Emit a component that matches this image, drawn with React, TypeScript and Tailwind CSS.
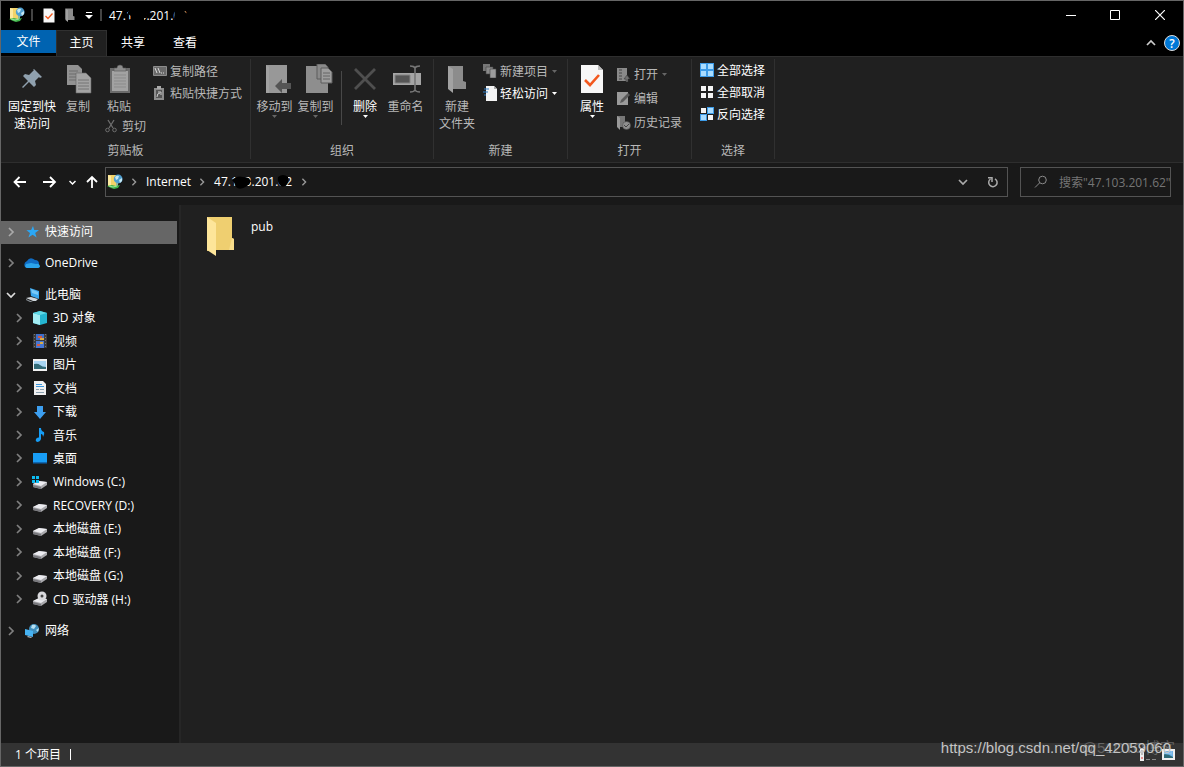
import type { ReactNode } from "react";
import clsx from "clsx";

type IconProps = { className?: string };

/* ---------- small shared glyphs ---------- */

function Chevron({ dir, className }: { dir: "right" | "down" | "up"; className?: string }) {
  const d = { right: "M3 1 L7 5 L3 9", down: "M1 3 L5 7 L9 3", up: "M1 7 L5 3 L9 7" }[dir];
  return (
    <svg viewBox="0 0 10 10" fill="none" stroke="currentColor" className={clsx("shrink-0", className ?? "size-[10px]")}>
      <path d={d} strokeWidth="1.7" />
    </svg>
  );
}

function Caret({ className }: IconProps) {
  return (
    <svg viewBox="0 0 5 3" fill="currentColor" className={clsx("h-[3px] w-[5px] shrink-0", className)}>
      <path d="M0 0h5L2.5 3z" />
    </svg>
  );
}

/* ---------- title bar icons ---------- */

function FtpIcon() {
  return (
    <svg viewBox="0 0 16 16" className="size-4 shrink-0">
      <path d="M1 1h9v11H1z" fill="#f3d368" />
      <path d="M1 1l3 1v10l-3-1z" fill="#fce9a0" />
      <circle cx="11.2" cy="5" r="4.4" fill="#4f9fd0" />
      <path d="M8 3q2-2 4-1l-1 3-2 1zM12 6l3-2v3l-2 2z" fill="#c5e8f5" />
      <path d="M9 9h2v3H9z" fill="#8fb6a0" />
      <path d="M0 12l5-1 4 1 4-1-2 3-4 1-3-1z" fill="#3fb54a" />
      <path d="M2 12l4 1 4-1" fill="none" stroke="#a2e3a0" />
    </svg>
  );
}

function CheckPage({ className }: IconProps) {
  return (
    <svg viewBox="0 0 24 30" className={className}>
      <path d="M1 1h17l5 5v23H1z" fill="#f7f7f7" />
      <path d="M18 1l5 5h-5z" fill="#bdbdbd" />
      <path d="M5 16l5 5 9-10" fill="none" stroke="#f2581e" strokeWidth="2.6" />
    </svg>
  );
}

function GrayFolder({ className }: IconProps) {
  return (
    <svg viewBox="0 0 20 28" className={className}>
      <path d="M1 1h15v15l3 1v7H6L1 22z" fill="#8c8c8c" />
      <path d="M1 1l5 3v24l-5-4z" fill="#a2a2a2" />
    </svg>
  );
}

/* ---------- ribbon icons ---------- */

const PinIcon = () => (
  <svg viewBox="0 0 24 24" className="size-6">
    <path d="M14 2l8 8-2 1-1-1-4 4 1 4-2 2-5-5-6 6-1-1 6-6-5-5 2-2 4 1 5-5-1-1z" fill="#8fa0ae" />
  </svg>
);

const CopyIcon = () => (
  <svg viewBox="-1 0 27 30" className="h-[30px] w-[27px]">
    <path d="M1 1h11l4 4v16H1z" fill="#929292" />
    <path d="M3 7h9M3 10h9M3 13h9M3 16h9" stroke="#6c6c6c" />
    <path d="M10 9h10l5 5v15H10z" fill="#a3a3a3" stroke="#666" strokeWidth=".6" />
    <path d="M12 16h11M12 19h11M12 22h11M12 25h11" stroke="#757575" />
  </svg>
);

const PasteIcon = () => (
  <svg viewBox="-2 0 24 30" className="h-[30px] w-6">
    <path d="M1 4h20v25H1z" fill="#6b6b6b" />
    <path d="M3 7h16v20H3z" fill="#a2a2a2" />
    <path d="M5 4h3q0-3 3-3t3 3h3v3H5z" fill="#8d8d8d" stroke="#555" strokeWidth=".6" />
    <path d="M5 11h12M5 14h12M5 17h12M5 20h12M5 23h12" stroke="#8b8b8b" />
  </svg>
);

const CutIcon = () => (
  <svg viewBox="0 0 12 14" fill="none" stroke="#6e6e6e" className="h-[14px] w-3">
    <path d="M3 1l5 8M9 1L4 9" strokeWidth="1.3" />
    <circle cx="2.5" cy="11" r="1.8" />
    <circle cx="9.5" cy="11" r="1.8" />
  </svg>
);

const PathIcon = () => (
  <svg viewBox="0 0 14 10" className="h-[10px] w-[14px]">
    <path d="M.5.5h13v9H.5z" fill="#6a6a6a" stroke="#8c8c8c" />
    <path d="M2 2l2 5M5 2l2 5M8 7h1M10 7h1" stroke="#ddd" />
  </svg>
);

const ShortcutIcon = () => (
  <svg viewBox="-1 0 11 14" className="h-[14px] w-[11px]">
    <path d="M0 2h10v12H0z" fill="#8d8d8d" />
    <path d="M3 0h4v3H3z" fill="#aaa" />
    <path d="M2 4h6v8H2z" fill="#555" />
    <path d="M3 11q0-4 3-4M4 6h3v3" fill="none" stroke="#ccc" />
  </svg>
);

const MoveToIcon = () => (
  <svg viewBox="-6 0 32 30" className="h-[30px] w-8">
    <path d="M1 1h21v28H1z" fill="#989898" />
    <path d="M1 1l3 2v26H1z" fill="#a2a2a2" />
    <path d="M10 22l7-7v4h9v6h-9v4z" fill="#555" />
  </svg>
);

const CopyToIcon = () => (
  <svg viewBox="-6 0 34 30" className="h-[30px] w-[34px]">
    <path d="M1 2h22v27H1z" fill="#8e8e8e" />
    <path d="M12 0h8l3 3v12H12z" fill="#8a8a8a" stroke="#5c5c5c" />
    <path d="M16 4h7l4 4v11H16z" fill="#9d9d9d" stroke="#5c5c5c" />
    <path d="M18 9h7M18 12h7M18 15h7" stroke="#656565" />
  </svg>
);

const DeleteIcon = () => (
  <svg viewBox="0 0 24 24" className="size-6">
    <path d="M2 2l20 20M22 2L2 22" stroke="#4f4f4f" strokeWidth="2.8" />
  </svg>
);

const RenameIcon = () => (
  <svg viewBox="-2 0 30 28" className="h-7 w-[30px]">
    <path d="M0 8h28v12H0z" fill="#a5a5a5" />
    <path d="M2 10h15v8H2z" fill="#555" stroke="#858585" />
    <path d="M22 2v24M17 1q4 0 5 2 1-2 5-2M17 27q4 0 5-2 1 2 5 2" fill="none" stroke="#777" strokeWidth="1.6" />
  </svg>
);

const NewItemIcon = () => (
  <svg viewBox="0 0 14 14" className="size-[14px]">
    <path d="M0 0h7v7H0z" fill="#777" />
    <path d="M3 3h7v7H3z" fill="#8b8b8b" stroke="#444" strokeWidth=".6" />
    <path d="M7 5h6v9H7z" fill="#9c9c9c" stroke="#444" strokeWidth=".6" />
  </svg>
);

const EasyAccessIcon = () => (
  <svg viewBox="0 0 14 16" className="h-4 w-[14px]">
    <path d="M3 1h8l3 3v12H3z" fill="#f4f4f4" />
    <path d="M11 1l3 3h-3z" fill="#aaa" />
    <path d="M1 4h5M0 7h5M1 10h2" stroke="#2f7fc8" strokeWidth="1.2" />
  </svg>
);

const OpenIcon = () => (
  <svg viewBox="0 0 13 15" className="h-[15px] w-[13px]">
    <path d="M0 1h10v13H0z" fill="#8a8a8a" />
    <path d="M2 3h3M2 6h3M2 9h3M2 12h3" stroke="#444" />
    <path d="M9 15v-3H7l3-4 3 4h-2v3z" fill="#707070" stroke="#333" strokeWidth=".5" />
  </svg>
);

const EditIcon = () => (
  <svg viewBox="0 0 13 15" className="h-[15px] w-[13px]">
    <path d="M0 1h11v13H0z" fill="#9a9a9a" />
    <path d="M3 12l1-3 7-7 2 2-7 7z" fill="#5a5a5a" />
  </svg>
);

const HistoryIcon = () => (
  <svg viewBox="0 0 14 15" className="h-[15px] w-[14px]">
    <path d="M0 1h8v11H0z" fill="#777" />
    <path d="M0 1l3 2v12l-3-3z" fill="#999" />
    <circle cx="9.5" cy="10.5" r="4" fill="#8f8f8f" stroke="#444" strokeWidth=".5" />
    <path d="M7 10l2 2 3-3" fill="none" stroke="#444" />
  </svg>
);

const BLUE = "#a9dcff";
const WHITE = "#f5f5f5";

function TilesIcon({ fills }: { fills: string[] }) {
  return (
    <svg viewBox="0 0 14 14" className="size-[14px]">
      {fills.map((fill, i) => {
        const x = (i % 2) * 7;
        const y = i > 1 ? 7 : 0;
        return fill === WHITE ? (
          <rect key={i} x={x + 1} y={y + 1} width="5" height="5" fill={fill} />
        ) : (
          <rect key={i} x={x + 0.5} y={y + 0.5} width="6" height="6" fill={fill} stroke="#3c9be8" />
        );
      })}
    </svg>
  );
}

/* ---------- navigation pane icons ---------- */

const StarIcon = () => (
  <svg viewBox="0 0 16 16" className="size-4">
    <path d="M9 2l1.200 4H15l-3.800 2.900 1.400 4.600-4-2.700-4.200 2.700 1.600-4.600L2.400 6.300l4.700-.2z" fill="#2ba7f5" />
  </svg>
);

const OneDriveIcon = () => (
  <svg viewBox="0 0 16 16" className="size-4">
    <path d="M1 12q-2-4 2-6 3-5 8-1 4 0 4 4l-2 4H3z" fill="#0f6cc4" />
    <path d="M3 13q-3-1-1-4l5-1 5 1q3-1 4 2 0 2-3 2z" fill="#2ba4ec" />
  </svg>
);

const PcIcon = () => (
  <svg viewBox="0 0 16 16" className="size-4">
    <path d="M6 1l9 3v8L7 9z" fill="#3aa7ee" />
    <path d="M7 2l7 3v3L8 6z" fill="#79c9f7" />
    <path d="M2 11l5-1 7 2-2 2-3 0z" fill="#cfd6db" />
    <path d="M2 12l7 3h-3l-4-2z" fill="#8b9298" />
  </svg>
);

const CubeIcon = () => (
  <svg viewBox="0 0 16 16" className="size-4">
    <path d="M8 1l7 2v10l-7 2-7-2V3z" fill="#25b5d0" />
    <path d="M1 3l7 2v10l-7-2z" fill="#a3edf3" />
    <path d="M8 1l7 2-7 2-7-2z" fill="#5fd8e6" />
  </svg>
);

const VideoIcon = () => (
  <svg viewBox="0 0 16 16" className="size-4">
    <path d="M1 1h14v14H1z" fill="#3b3b3b" />
    <path d="M2.500 1v14M13.500 1v14" stroke="#777" strokeDasharray="1 2" />
    <path d="M4 1h8v6H4z" fill="#3f6fc9" />
    <path d="M4 8h8v7H4z" fill="#4777d2" />
    <path d="M6 3h4v2H6zM5 11h3v2H5z" fill="#d45a3e" />
    <path d="M8 5h4v2H8zM8 9h3v2H8z" fill="#d9ac45" />
  </svg>
);

const PictureIcon = () => (
  <svg viewBox="0 0 16 16" className="size-4">
    <path d="M1 2h14v12H1z" fill="#f2f2f2" />
    <path d="M2 4h12v8H2z" fill="#a8d5f2" />
    <path d="M2 7q4-1 6 1t6 2v2H2z" fill="#326b78" />
  </svg>
);

const DocIcon = () => (
  <svg viewBox="0 0 16 16" className="size-4">
    <path d="M2 1h9l3 3v11H2z" fill="#f0f0f0" />
    <path d="M4 4.500h6M4 6.500h8" stroke="#3c97dc" />
    <path d="M4 9.500h3M8 9.500h4M4 12.500h8" stroke="#8aa0b0" />
  </svg>
);

const DownloadIcon = () => (
  <svg viewBox="0 0 16 16" className="size-4">
    <path d="M5 2h6v6h3l-6 7-6-7h3z" fill="#3d9ff0" />
  </svg>
);

const MusicIcon = () => (
  <svg viewBox="0 0 16 16" className="size-4">
    <path d="M7 1h2q0 3 3 4 1 2-1 5 0-3-2-3v5q-1 3-4 3-2-1-1-3 1-2 3-1.500z" fill="#169df5" />
  </svg>
);

const DesktopIcon = () => (
  <svg viewBox="0 0 16 16" className="size-4">
    <path d="M1 3h14v10H1z" fill="#189df5" />
    <path d="M1 12h14v1.500H1z" fill="#0f66b0" />
  </svg>
);

function DriveIcon({ kind }: { kind?: "windows" | "cd" }) {
  return (
    <svg viewBox="0 0 16 16" className="size-4">
      <path d="M1 10l6-3 8 1v3l-6 4-8-2z" fill="#a9a9ad" />
      <path d="M1 10l6-3 8 1-6 4z" fill="#ececf0" />
      <path d="M1 11l8 2v2l-8-2z" fill="#77777c" />
      {kind === "windows" && <path d="M0 2h3v3H0zM4 2h3v3H4zM0 6h3v3H0zM4 6h3v3H4z" fill="#0cbcf2" />}
      {kind === "cd" && (
        <>
          <circle cx="10" cy="5" r="4.5" fill="#d9d9dc" />
          <circle cx="10" cy="5" r="1.5" fill="#444" />
        </>
      )}
    </svg>
  );
}

const NetworkIcon = () => (
  <svg viewBox="0 0 16 16" className="size-4">
    <circle cx="10" cy="6" r="5" fill="#3f8ebc" />
    <path d="M8 2q3-1 4 1l-2 3-3-1zM12 7l3-2-1 4z" fill="#b7dff0" />
    <path d="M1 6l8 2v6l-8-2z" fill="#46b2f2" />
    <path d="M4 13l4 1-1 1-4-1z" fill="#aab4bb" />
  </svg>
);

/* ---------- ribbon building blocks ---------- */

function Group({ label, className, children }: { label: string; className?: string; children: ReactNode }) {
  return (
    <section aria-label={label} className={clsx("flex shrink-0 flex-col border-r border-[#303030]", className)}>
      <div className="flex h-[83px] items-start">{children}</div>
      <div className="text-center text-[#b8b8b8]">{label}</div>
    </section>
  );
}

interface BigButtonProps {
  icon: ReactNode;
  lines: string[];
  enabled?: boolean;
  menu?: boolean;
  className?: string;
}

function BigButton({ icon, lines, enabled, menu, className }: BigButtonProps) {
  return (
    <button className={clsx("flex shrink-0 flex-col items-center pt-1", enabled ? "text-white" : "text-[#b8b8b8]", className)}>
      <span className="mb-[3px] flex h-8 items-center justify-center">{icon}</span>
      {lines.map((line) => (
        <span key={line} className="whitespace-nowrap">{line}</span>
      ))}
      {menu && <Caret className={enabled ? "text-white" : "text-[#666]"} />}
    </button>
  );
}

interface SmallButtonProps {
  icon: ReactNode;
  label: string;
  enabled?: boolean;
  menu?: boolean;
  className?: string;
}

function SmallButton({ icon, label, enabled, menu, className }: SmallButtonProps) {
  return (
    <button className={clsx("flex items-center whitespace-nowrap", enabled ? "text-white" : "text-[#b8b8b8]", className ?? "h-[22px]")}>
      <span className="flex w-[17px] items-center">{icon}</span>
      {label}
      {menu && <Caret className={clsx("ml-1", enabled ? "text-white" : "text-[#666]")} />}
    </button>
  );
}

/* ---------- navigation pane ---------- */

function TreeRow({ icon, label, open, selected, className }: {
  icon: ReactNode;
  label: string;
  open?: boolean;
  selected?: boolean;
  className?: string;
}) {
  return (
    <button
      aria-expanded={!!open}
      className={clsx("flex w-full items-center text-left", selected && "bg-[#666]", className)}
    >
      <span className="mr-[3px] flex w-5 justify-center">
        <span className={open ? "text-[#ddd]" : selected ? "text-[#aaa]" : "text-[#808080]"}>
          <Chevron dir={open ? "down" : "right"} />
        </span>
      </span>
      <span className="mr-[5px]">{icon}</span>
      {label}
    </button>
  );
}

const places = [
  { label: "3D 对象", icon: <CubeIcon /> },
  { label: "视频", icon: <VideoIcon /> },
  { label: "图片", icon: <PictureIcon /> },
  { label: "文档", icon: <DocIcon /> },
  { label: "下载", icon: <DownloadIcon /> },
  { label: "音乐", icon: <MusicIcon /> },
  { label: "桌面", icon: <DesktopIcon /> },
  { label: "Windows (C:)", icon: <DriveIcon kind="windows" /> },
  { label: "RECOVERY (D:)", icon: <DriveIcon /> },
  { label: "本地磁盘 (E:)", icon: <DriveIcon /> },
  { label: "本地磁盘 (F:)", icon: <DriveIcon /> },
  { label: "本地磁盘 (G:)", icon: <DriveIcon /> },
  { label: "CD 驱动器 (H:)", icon: <DriveIcon kind="cd" /> },
];

function TitleBar() {
  return (
    <header className="flex h-[29px] items-center bg-black pb-px pl-2">
      <FtpIcon />
      <span className="ml-1.5 h-3 w-[2px] bg-[#444]" />
      <button aria-label="属性" className="ml-[10px]"><CheckPage className="h-[15px] w-3" /></button>
      <button aria-label="新建文件夹" className="ml-[10px]"><GrayFolder className="h-[14px] w-[10px]" /></button>
      <button aria-label="自定义快速访问工具栏" className="ml-[10px]">
        <svg viewBox="0 0 8 8" fill="#fff" className="size-2"><path d="M1 1h6v1H1zM0 4h8L4 8z" /></svg>
      </button>
      <span className="mx-[7px] h-3 w-[2px] bg-[#444]" />
      <h1 className="relative text-white">
        47.103.201.62
        {/* censored octets */}
        <svg viewBox="0 0 80 16" className="absolute inset-0 h-4 w-20">
          <path d="M22 0h15v11h-2v5H17v-3l5-1V9l-3-2V5zM66 0h8l2 5 4 3v8H68l-3-4z" fill="#000" />
        </svg>
      </h1>
      <div className="ml-auto flex text-white">
        <button aria-label="最小化" className="flex w-11 justify-center">
          <svg viewBox="0 0 10 10" className="size-[10px]"><path d="M0 5.500h10" stroke="#fff" /></svg>
        </button>
        <button aria-label="最大化" className="flex w-11 justify-center">
          <svg viewBox="0 0 10 10" fill="none" className="size-[10px]"><path d="M.5.5h9v9h-9z" stroke="#fff" /></svg>
        </button>
        <button aria-label="关闭" className="flex w-[46px] justify-center">
          <svg viewBox="0 0 10 10" className="size-[10px]"><path d="M0 0l10 10M10 0L0 10" stroke="#fff" strokeWidth="1.2" /></svg>
        </button>
      </div>
    </header>
  );
}

function Ribbon() {
  return (
    <>
      <div className="flex h-[26px] bg-black text-white">
        <button className="mb-[3px] w-[55px] bg-[#0063b1]">文件</button>
        <button className="w-[51px] border-x border-t border-[#303030] bg-[#202020] pb-0.5">主页</button>
        <button className="w-[52px] pb-0.5">共享</button>
        <button className="w-[52px] pb-0.5">查看</button>
        <button aria-label="最小化功能区" className="ml-auto text-[#ccc]"><Chevron dir="up" /></button>
        <button aria-label="帮助" className="mr-[3px] ml-2">
          <span className="flex size-4 items-center justify-center rounded-full border border-[#ddd] bg-[#0078d7] font-semibold text-white">?</span>
        </button>
      </div>
      <div className="flex h-[107px] shrink-0 border-y border-[#2e2e2e] bg-[#202020] pt-0.5 pb-[3px]">
        <Group label="剪贴板" className="w-[250px]">
          <BigButton enabled icon={<PinIcon />} lines={["固定到快", "速访问"]} className="ml-1.5 w-[50px]" />
          <BigButton icon={<CopyIcon />} lines={["复制"]} className="w-[42px]" />
          <div className="ml-1.5 w-[46px] shrink-0">
            <BigButton icon={<PasteIcon />} lines={["粘贴"]} className="w-7" />
            <SmallButton icon={<CutIcon />} label="剪切" className="mt-[2px] h-[18px]" />
          </div>
          <div className="ml-[2px] pt-px">
            <SmallButton icon={<PathIcon />} label="复制路径" />
            <SmallButton icon={<ShortcutIcon />} label="粘贴快捷方式" />
          </div>
        </Group>
        <Group label="组织" className="w-[183px]">
          <BigButton menu icon={<MoveToIcon />} lines={["移动到"]} className="ml-[3px] w-[41px]" />
          <BigButton menu icon={<CopyToIcon />} lines={["复制到"]} className="w-[41px]" />
          <span className="mt-3 mr-[3px] ml-[5px] h-[54px] w-px bg-[#484848]" />
          <BigButton enabled menu icon={<DeleteIcon />} lines={["删除"]} className="w-10" />
          <BigButton icon={<RenameIcon />} lines={["重命名"]} className="w-[41px]" />
        </Group>
        <Group label="新建" className="w-[134px]">
          <BigButton icon={<GrayFolder className="h-7 w-5" />} lines={["新建", "文件夹"]} className="ml-px w-[44px]" />
          <div className="ml-1 pt-px">
            <SmallButton menu icon={<NewItemIcon />} label="新建项目" />
            <SmallButton enabled menu icon={<EasyAccessIcon />} label="轻松访问" />
          </div>
        </Group>
        <Group label="打开" className="w-[124px]">
          <BigButton enabled menu icon={<CheckPage className="h-[30px] w-6" />} lines={["属性"]} className="ml-[3px] w-[42px]" />
          <div className="ml-1 pt-[3px]">
            <SmallButton menu icon={<OpenIcon />} label="打开" className="h-6" />
            <SmallButton icon={<EditIcon />} label="编辑" className="h-6" />
            <SmallButton icon={<HistoryIcon />} label="历史记录" className="h-6" />
          </div>
        </Group>
        <Group label="选择" className="w-[83px]">
          <div className="ml-2">
            <SmallButton enabled icon={<TilesIcon fills={[BLUE, BLUE, BLUE, BLUE]} />} label="全部选择" />
            <SmallButton enabled icon={<TilesIcon fills={[WHITE, WHITE, WHITE, WHITE]} />} label="全部取消" />
            <SmallButton enabled icon={<TilesIcon fills={[WHITE, BLUE, BLUE, WHITE]} />} label="反向选择" />
          </div>
        </Group>
      </div>
    </>
  );
}

function AddressBar() {
  return (
    <div className="flex h-[42px] shrink-0 items-start bg-[#191919] pt-1 pr-3 pl-3 text-white">
      <div className="flex h-[30px] w-[92px] shrink-0 items-center">
        <button aria-label="后退">
          <svg viewBox="0 0 14 12" fill="none" stroke="#fff" strokeWidth="1.8" className="h-3 w-[14px]"><path d="M13 6H1.500M6.500 1l-5 5 5 5" /></svg>
        </button>
        <button aria-label="前进" className="ml-4">
          <svg viewBox="0 0 14 12" fill="none" stroke="#fff" strokeWidth="1.8" className="h-3 w-[14px]"><path d="M0 6h12M7 1l5 5-5 5" /></svg>
        </button>
        <button aria-label="最近浏览的位置" className="ml-3">
          <svg viewBox="0 0 7 7" fill="none" stroke="#fff" strokeWidth="1.5" className="size-[7px]"><path d="M.5 2l3 3 3-3" /></svg>
        </button>
        <button aria-label="上移" className="ml-[10px]">
          <svg viewBox="0 0 12 14" fill="none" stroke="#fff" strokeWidth="1.8" className="h-[14px] w-3"><path d="M6 13V2M1 7l5-5 5 5" /></svg>
        </button>
      </div>
      <nav className="flex h-[30px] flex-1 items-center border border-[#535353] pb-px pl-px text-[#999]">
        <FtpIcon />
        <Chevron dir="right" className="ml-[7px] size-2" />
        <button className="ml-2 text-white">Internet</button>
        <Chevron dir="right" className="ml-[7px] size-2" />
        <button className="relative ml-2 text-white">
          47.103.201.62
          {/* censored octets */}
          <svg viewBox="0 0 80 20" className="absolute inset-x-0 -top-px h-5 w-20">
            <path d="M18 8q5-5 11-3 6 0 7 3 1 4-3 6-7 5-11 1-1-4-4-7zM64 5q5-4 10 0v5q-2 6-7 4-4-3-3-9z" fill="#000" />
          </svg>
        </button>
        <Chevron dir="right" className="ml-2 size-2" />
        <button aria-label="以前的位置" className="ml-auto text-[#aaa]"><Chevron dir="down" /></button>
        <button aria-label="刷新" className="mr-2 ml-[19px] text-[#aaa]">
          <svg viewBox="0 0 12 12" fill="none" stroke="currentColor" strokeWidth="1.5" className="size-3">
            <path d="M8 2.800a4.200 4.200 0 1 1-4.500.2M1 1.700h4V6" />
          </svg>
        </button>
      </nav>
      <label className="ml-3 flex h-[30px] w-[151px] items-center border border-[#535353] pl-[13px]">
        <svg viewBox="0 0 14 14" fill="none" stroke="#8a8a8a" className="size-[14px] shrink-0">
          <circle cx="8.5" cy="5" r="3.8" />
          <path d="M5.700 7.800L1 12.500" />
        </svg>
        <input
          type="text"
          aria-label="搜索"
          placeholder={'搜索"47.103.201.62"'}
          className="ml-[11px] w-full min-w-0 bg-transparent outline-none placeholder:text-[#757575]"
        />
      </label>
    </div>
  );
}

export default function App() {
  return (
    <div className="relative flex h-screen min-h-[660px] flex-col overflow-hidden border border-[#666] bg-[#202020] font-['Open_Sans','Noto_Sans_CJK_SC',sans-serif] text-[12px] leading-[17px]">
      <TitleBar />
      <Ribbon />
      <AddressBar />
      <div className="flex min-h-0 flex-1">
        <aside className="w-[180px] shrink-0 border-r-2 border-[#262626] bg-[#191919] pt-4 pr-[2px] text-white">
          <TreeRow selected icon={<StarIcon />} label="快速访问" className="h-[23px] pb-0.5" />
          <TreeRow icon={<OneDriveIcon />} label="OneDrive" className="mt-2 h-[23px] pb-0.5" />
          <TreeRow open icon={<PcIcon />} label="此电脑" className="mt-2 h-[23px]" />
          <div className="grid h-[305px] auto-rows-fr pl-2">
            {places.map((p) => (
              <TreeRow key={p.label} icon={p.icon} label={p.label} />
            ))}
          </div>
          <TreeRow icon={<NetworkIcon />} label="网络" className="mt-2 h-[23px]" />
        </aside>
        <main className="flex-1 pt-2.5 pl-[26px]">
          <button className="flex items-start text-white">
            <svg viewBox="0 0 28 42" className="h-[42px] w-7">
              <path d="M0 2h25v21l2 1v11H8L0 36z" fill="#efcf70" />
              <path d="M25 23l2 1v11h-5z" fill="#f8dd8a" />
              <path d="M0 2l9 6v33l-9-6z" fill="#fde59a" />
            </svg>
            <span className="mt-[3px] ml-4">pub</span>
          </button>
        </main>
      </div>
      <footer className="flex h-[23px] shrink-0 items-center bg-[#333] pr-2 pl-[14px] text-white">
        <span>1 个项目</span>
        <span className="ml-[9px] h-[11px] w-px bg-white" />
        <button aria-label="详细信息" className="ml-auto">
          <svg viewBox="0 0 16 12" className="h-3 w-4">
            <path d="M0 0h4v12H0z" fill="#eee" />
            <path d="M1 2h2M1 5h2" stroke="#888" />
            <path d="M1 9h2" stroke="#d33" />
            <path d="M6 10.500h4M12 10.500h4" stroke="#888" />
          </svg>
        </button>
        <button aria-label="大图标" className="ml-1.5">
          <svg viewBox="0 0 13 11" className="h-[11px] w-[13px]">
            <path d="M0 0h13v11H0z" fill="#f0f0f0" />
            <path d="M2 2h9v7H2z" fill="#6cb3e8" />
            <path d="M2 5q5 0 9 3v1H2z" fill="#2f6b78" />
          </svg>
        </button>
      </footer>
      {/* blog watermarks */}
      <span className="absolute right-2 bottom-2 font-['Liberation_Sans','Noto_Sans_CJK_SC',sans-serif] text-[15px] leading-5 text-white/25">@51CTO博客</span>
      <span className="absolute right-3 bottom-2 font-['Liberation_Sans',sans-serif] text-[15px] leading-5 text-[#c4c4c4]">https://blog.csdn.net/qq_42059060</span>
    </div>
  );
}
